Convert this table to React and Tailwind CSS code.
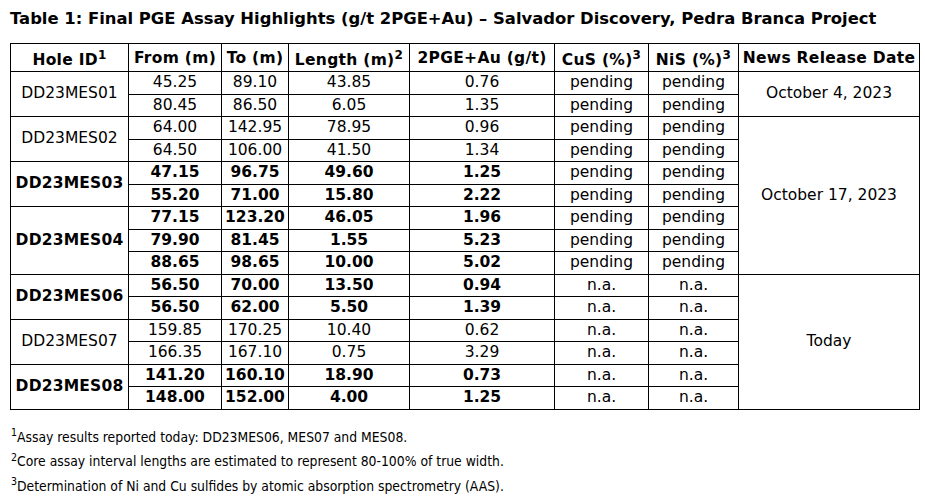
import React from "react";

const rows = [
  { id: "DD23MES01", bold: false, span: 2, date: "October 4, 2023", dateSpan: 2, data: [["45.25","89.10","43.85","0.76","pending"],["80.45","86.50","6.05","1.35","pending"]] },
  { id: "DD23MES02", bold: false, span: 2, date: "October 17, 2023", dateSpan: 7, data: [["64.00","142.95","78.95","0.96","pending"],["64.50","106.00","41.50","1.34","pending"]] },
  { id: "DD23MES03", bold: true, span: 2, data: [["47.15","96.75","49.60","1.25","pending"],["55.20","71.00","15.80","2.22","pending"]] },
  { id: "DD23MES04", bold: true, span: 3, data: [["77.15","123.20","46.05","1.96","pending"],["79.90","81.45","1.55","5.23","pending"],["88.65","98.65","10.00","5.02","pending"]] },
  { id: "DD23MES06", bold: true, span: 2, date: "Today", dateSpan: 6, data: [["56.50","70.00","13.50","0.94","n.a."],["56.50","62.00","5.50","1.39","n.a."]] },
  { id: "DD23MES07", bold: false, span: 2, data: [["159.85","170.25","10.40","0.62","n.a."],["166.35","167.10","0.75","3.29","n.a."]] },
  { id: "DD23MES08", bold: true, span: 2, data: [["141.20","160.10","18.90","0.73","n.a."],["148.00","152.00","4.00","1.25","n.a."]] },
];

const td = "border border-black text-center align-middle p-0 leading-none whitespace-nowrap";

export default function App() {
  return (
    <div className="bg-white w-[925px] h-[500px] text-black pl-[10px] pt-[9px]" style={{ fontFamily: "'DejaVu Sans', Verdana, sans-serif" }}>
      <div className="text-[16.4px] font-bold leading-[20px] h-[34px]">
        Table 1: Final PGE Assay Highlights (g/t 2PGE+Au) – Salvador Discovery, Pedra Branca Project
      </div>
      <table className="border-collapse table-fixed w-[909px] text-[15.5px]">
        <colgroup>
          <col className="w-[118px]" />
          <col className="w-[93px]" />
          <col className="w-[67px]" />
          <col className="w-[121px]" />
          <col className="w-[145px]" />
          <col className="w-[94px]" />
          <col className="w-[90px]" />
          <col className="w-[181px]" />
        </colgroup>
        <thead>
          <tr className="h-[28px] font-bold tracking-[0.3px]">
            <th className={td + " pt-[7px]"}>Hole ID<sup className="text-[12px]">1</sup></th>
            <th className={td + " pt-[3px]"}>From (m)</th>
            <th className={td + " pt-[3px]"}>To (m)</th>
            <th className={td + " pt-[7px]"}>Length (m)<sup className="text-[12px]">2</sup></th>
            <th className={td + " pt-[3px]"}>2PGE+Au (g/t)</th>
            <th className={td + " pt-[7px]"}>CuS (%)<sup className="text-[12px]">3</sup></th>
            <th className={td + " pt-[7px]"}>NiS (%)<sup className="text-[12px]">3</sup></th>
            <th className={td + " pt-[3px]"}>News Release Date</th>
          </tr>
        </thead>
        <tbody>
          {rows.map((g) =>
            g.data.map((d, i) => (
              <tr key={g.id + i} className="h-[22.5px]">
                {i === 0 && (
                  <td rowSpan={g.span} className={td + (g.bold ? " font-bold tracking-[0.2px]" : "")}>{g.id}</td>
                )}
                {d.slice(0, 4).map((v, j) => (
                  <td key={j} className={td + (g.bold ? " font-bold" : "")}>{v}</td>
                ))}
                <td className={td}>{d[4]}</td>
                <td className={td}>{d[4]}</td>
                {i === 0 && g.date && (
                  <td rowSpan={g.dateSpan} className={td}>{g.date}</td>
                )}
              </tr>
            ))
          )}
        </tbody>
      </table>
      <div className="mt-[15px] text-[13.8px] leading-[24.5px] pl-[1px]" style={{ fontFamily: "'DejaVu Sans Condensed', 'Noto Sans', Tahoma, sans-serif" }}>
        <div><sup className="text-[10.5px]">1</sup>Assay results reported today: DD23MES06, MES07 and MES08.</div>
        <div><sup className="text-[10.5px]">2</sup>Core assay interval lengths are estimated to represent 80-100% of true width.</div>
        <div><sup className="text-[10.5px]">3</sup>Determination of Ni and Cu sulfides by atomic absorption spectrometry (AAS).</div>
      </div>
    </div>
  );
}
